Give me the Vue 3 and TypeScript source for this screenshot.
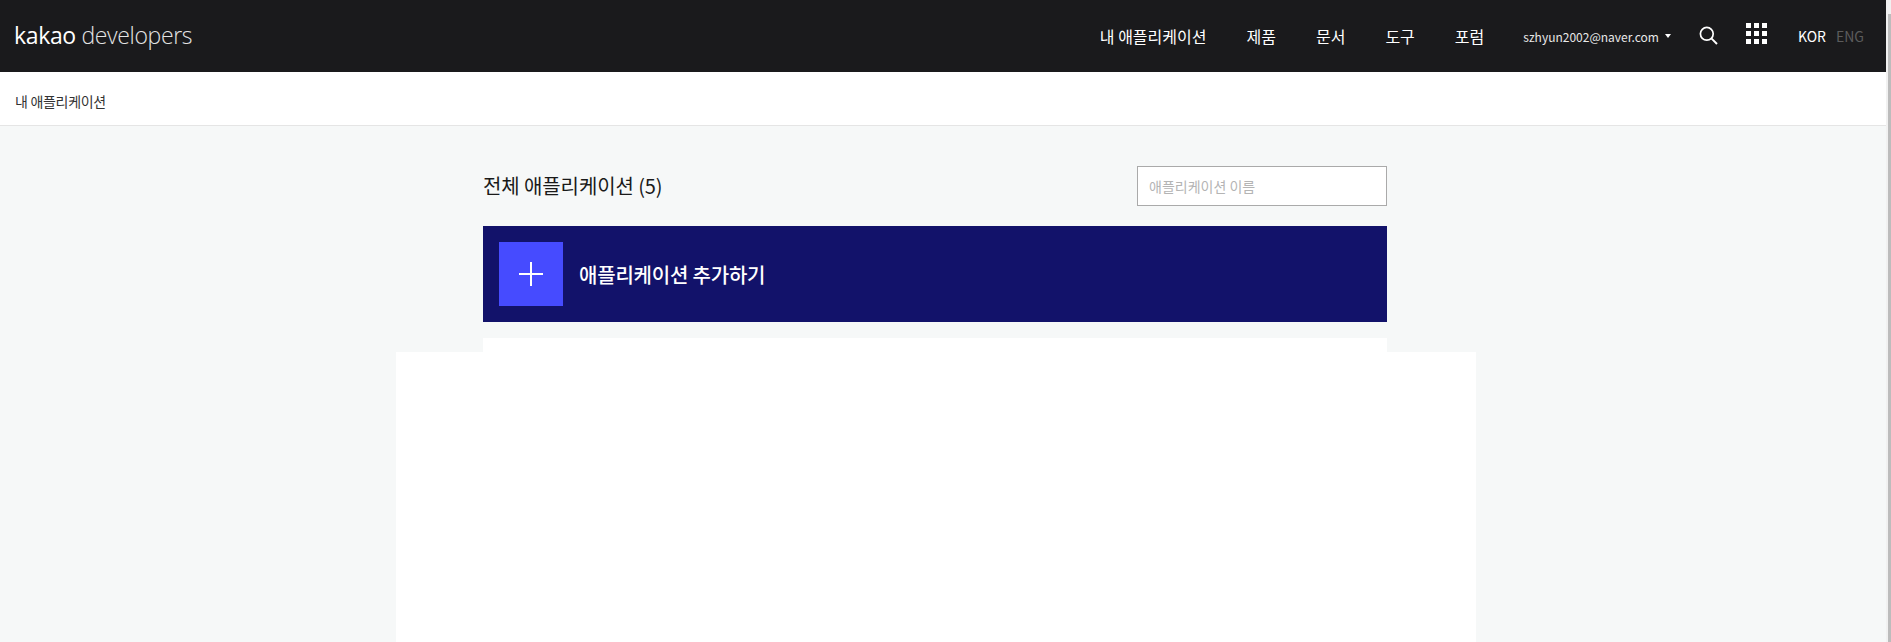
<template>
  <div class="page">
    <header class="gnb">
      <div class="logo"><span class="logo_kakao">kakao</span> <span class="logo_dev">developers</span></div>
      <nav class="menu">
        <a v-for="item in menu" :key="item">{{ item }}</a>
      </nav>
      <div class="account">
        <span>szhyun2002@naver.com</span>
        <i class="caret"></i>
      </div>
      <svg class="search" width="19" height="19" viewBox="0 0 19 19" fill="none" stroke="#fff">
        <circle cx="7.8" cy="7.8" r="6.4" stroke-width="1.7" />
        <path d="M12.4 12.4 L18 18" stroke-width="1.9" />
      </svg>
      <div class="apps">
        <i v-for="n in 9" :key="n"></i>
      </div>
      <div class="lang">
        <span class="on">KOR</span>
        <span class="off">ENG</span>
      </div>
    </header>
    <div class="sub">내 애플리케이션</div>
    <main class="content">
      <div class="overlay"></div>
      <div class="wrap">
        <div class="title_row">
          <h2>전체 애플리케이션 (5)</h2>
          <input class="search_input" type="text" placeholder="애플리케이션 이름" />
        </div>
        <div class="add_banner">
          <div class="add_icon">
            <svg width="24" height="24" viewBox="0 0 24 24" stroke="#fff" stroke-width="2">
              <path d="M12 0 V24 M0 12 H24" />
            </svg>
          </div>
          <strong>애플리케이션 추가하기</strong>
        </div>
        <div class="list"></div>
      </div>
    </main>
    <div class="scrollbar"><div class="thumb"></div></div>
  </div>
</template>

<script setup lang="ts">
const menu: string[] = ['내 애플리케이션', '제품', '문서', '도구', '포럼']
</script>

<style>
html,
body {
  margin: 0;
  overflow: hidden;
}
</style>

<style scoped>
.page {
  position: relative;
  height: 642px;
  display: flex;
  flex-direction: column;
  font-family: "Noto Sans CJK KR", "Noto Sans", sans-serif;
  background: #f6f8f8;
  overflow: hidden;
}

.gnb {
  flex-shrink: 0;
  height: 72px;
  margin-right: 5px;
  padding: 0 22px 0 14px;
  display: flex;
  align-items: center;
  background: #1a1a1c;
  color: #fff;
}

.logo {
  font-family: "Open Sans", sans-serif;
  font-size: 23px;
  font-weight: 300;
  letter-spacing: -0.35px;
  margin-top: -3px;
  margin-right: auto;
}

.logo_kakao {
  font-weight: 400;
}

.logo_dev {
  color: #e4e4e4;
}

.menu {
  display: flex;
  gap: 40px;
  font-size: 16px;
  font-weight: 400;
  margin-top: -1px;
}

.account {
  margin-left: 39px;
  display: flex;
  align-items: center;
  gap: 6px;
  font-size: 12px;
  color: #e8e8e8;
}

.caret {
  width: 0;
  height: 0;
  border-left: 3px solid transparent;
  border-right: 3px solid transparent;
  border-top: 4px solid #fff;
}

.search {
  margin-left: 28px;
  margin-top: -1px;
}

.apps {
  margin-left: 28px;
  display: grid;
  grid-template-columns: repeat(3, 5px);
  gap: 3px;
  margin-top: -5px;
}

.apps i {
  width: 5px;
  height: 5px;
  background: #fff;
}

.lang {
  margin-left: 31px;
  display: flex;
  gap: 10px;
  font-size: 14px;
}

.off {
  color: #5c5c5c;
}

.sub {
  flex-shrink: 0;
  box-sizing: border-box;
  height: 54px;
  margin-right: 5px;
  padding: 4px 0 0 15px;
  display: flex;
  align-items: center;
  background: #fff;
  border-bottom: 1px solid #e5e5e5;
  color: #333;
  font-size: 14px;
  letter-spacing: -0.3px;
}

.content {
  position: relative;
  flex: 1;
}

.wrap {
  width: 904px;
  margin-left: 483px;
  padding-top: 40px;
}

.title_row {
  height: 40px;
  display: flex;
  align-items: center;
  justify-content: space-between;
}

h2 {
  margin: -1px 0 0;
  font-size: 20px;
  font-weight: 400;
  letter-spacing: -0.1px;
  color: #1a1a1a;
}

.search_input {
  box-sizing: border-box;
  width: 250px;
  height: 40px;
  padding: 0 11px;
  border: 1px solid #aaa;
  background: #fff;
  font-family: inherit;
  font-size: 14px;
  outline: none;
}

.search_input::placeholder {
  color: #b4b4b4;
}

.add_banner {
  margin-top: 20px;
  padding: 16px;
  display: flex;
  align-items: center;
  gap: 16px;
  background: #12126a;
  color: #fff;
  font-size: 20px;
  letter-spacing: -0.2px;
}

.add_banner strong {
  font-weight: 500;
}

.add_icon {
  width: 64px;
  height: 64px;
  display: flex;
  align-items: center;
  justify-content: center;
  background: #464bff;
}

.list {
  margin-top: 16px;
  height: 400px;
  background: #fff;
}

/* white block painted over the lower part of the page */
.overlay {
  position: absolute;
  z-index: 1;
  left: 396px;
  top: 226px;
  width: 1080px;
  height: 290px;
  background: #fff;
}

.scrollbar {
  position: absolute;
  top: 0;
  right: 0;
  bottom: 0;
  width: 5px;
  background: #f1f1f1;
}

.thumb {
  position: absolute;
  top: 14px;
  right: 0;
  bottom: 0;
  width: 3px;
  background: #bcbcbc;
}
</style>
